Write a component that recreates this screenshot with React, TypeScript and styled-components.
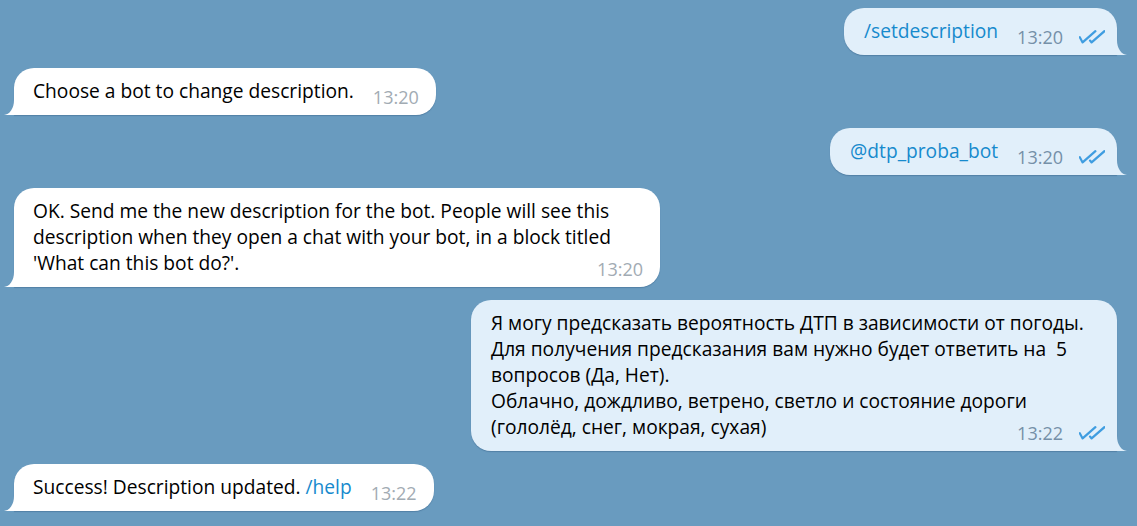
import React from "react";
import styled, { createGlobalStyle } from "styled-components";

const GlobalStyle = createGlobalStyle`
  html, body, #root {
    margin: 0;
    height: 100%;
  }
  body {
    background: #699bbf;
    font-family: "Open Sans", "Noto Sans", sans-serif;
    -webkit-font-smoothing: antialiased;
  }
`;

type Msg = {
  out: boolean;
  time: string;
  content: React.ReactNode;
};

const messages: Msg[] = [
  { out: true, time: "13:20", content: <Link>/setdescription</Link> },
  { out: false, time: "13:20", content: "Choose a bot to change description." },
  { out: true, time: "13:20", content: <Link>@dtp_proba_bot</Link> },
  {
    out: false,
    time: "13:20",
    content:
      "OK. Send me the new description for the bot. People will see this description when they open a chat with your bot, in a block titled 'What can this bot do?'.",
  },
  {
    out: true,
    time: "13:22",
    content:
      "Я могу предсказать вероятность ДТП в зависимости от погоды.\nДля получения предсказания вам нужно будет ответить на  5 вопросов (Да, Нет).\nОблачно, дождливо, ветрено, светло и состояние дороги (гололёд, снег, мокрая, сухая)",
  },
  {
    out: false,
    time: "13:22",
    content: (
      <>
        Success! Description updated. <Link>/help</Link>
      </>
    ),
  },
];

function Link({ children }: { children: React.ReactNode }) {
  return <LinkText>{children}</LinkText>;
}

// double tick: "read" status
const ReadChecks = () => (
  <Checks viewBox="0 0 26 14" width="26" height="14">
    <path d="M0.8 7.2 L3.6 12.4 L16.4 1.2" />
    <path d="M11 10.6 L12.6 12.4 L25.4 1.2" />
  </Checks>
);

const Tail = ({ out }: { out: boolean }) => (
  <TailSvg $out={out} viewBox="0 0 10 15" width="10" height="15">
    <path d="M0 0 A10 15 0 0 0 10 15 L0 15 Z" />
  </TailSvg>
);

export default function App() {
  return (
    <>
      <GlobalStyle />
      <Chat>
        {messages.map((m, i) => (
          <Row key={i} $out={m.out}>
            <Bubble $out={m.out}>
              {m.content}
              <Meta $out={m.out}>
                {m.time}
                {m.out && <ReadChecks />}
              </Meta>
              <Tail out={m.out} />
            </Bubble>
          </Row>
        ))}
      </Chat>
    </>
  );
}

const Chat = styled.div`
  display: flex;
  flex-direction: column;
  gap: 13px;
  padding: 8px 20px 0 14px;
  box-sizing: border-box;
  height: 100%;
`;

const Row = styled.div<{ $out: boolean }>`
  display: flex;
  justify-content: ${(p) => (p.$out ? "flex-end" : "flex-start")};
`;

const Bubble = styled.div<{ $out: boolean }>`
  position: relative;
  display: flow-root;
  box-sizing: border-box;
  max-width: 646px;
  padding: 10px ${(p) => (p.$out ? "12px" : "17px")} 11px
    ${(p) => (p.$out ? "20px" : "19px")};
  background: ${(p) => (p.$out ? "#e1effa" : "#ffffff")};
  color: #000;
  font-size: 19.2px;
  line-height: 26px;
  white-space: pre-wrap;
  border-radius: ${(p) => (p.$out ? "20px 20px 0 20px" : "20px 20px 20px 0")};
  box-shadow: 0 1px 1px rgba(40, 80, 120, 0.35);
`;

const Meta = styled.span<{ $out: boolean }>`
  float: right;
  display: flex;
  align-items: center;
  position: relative;
  top: 6px;
  margin-left: 19px;
  font-size: 18px;
  line-height: 26px;
  white-space: nowrap;
  color: ${(p) => (p.$out ? "#7590a8" : "#a2abb3")};
`;

const Checks = styled.svg`
  margin-left: 16px;
  fill: none;
  stroke: #3f9de0;
  stroke-width: 2.2;
  stroke-linecap: round;
  stroke-linejoin: round;
`;

const LinkText = styled.span`
  color: #168acd;
`;

const TailSvg = styled.svg<{ $out: boolean }>`
  position: absolute;
  bottom: 0;
  ${(p) => (p.$out ? "right: -10px;" : "left: -10px; transform: scaleX(-1);")}
  fill: ${(p) => (p.$out ? "#e1effa" : "#ffffff")};
`;
